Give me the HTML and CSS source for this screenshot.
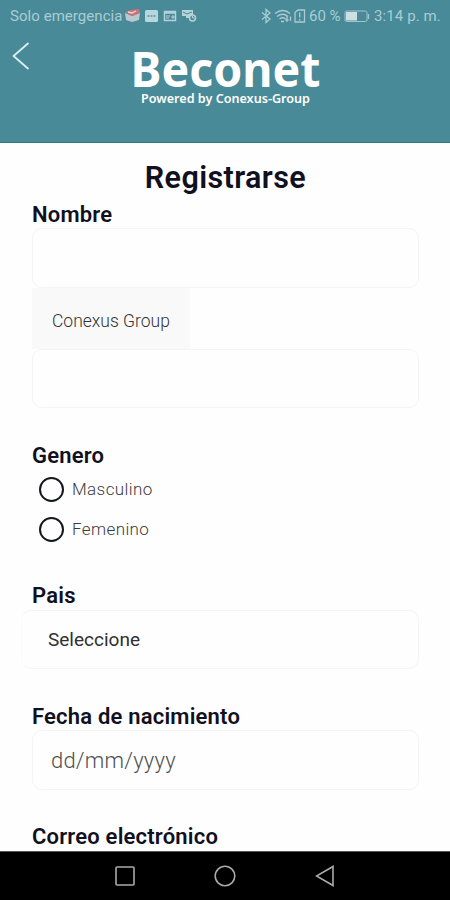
FILE: index.html
```html
<!DOCTYPE html>
<html lang="es">
<head>
<meta charset="utf-8">
<title>Registrarse</title>
<link rel="stylesheet" href="styles.css">
</head>
<body>
<header class="header">
  <div class="status">
    <span class="carrier">Solo emergencia</span>
    <svg class="notifications" width="72" height="14" viewBox="0 0 72 14">
      <path d="M0 4 7 7 15 4 14 11 7 13 1 11Z" fill="#b9c9cf"/>
      <path d="M0 3 6 1 14 0 15 4 7 7Z" fill="#ce7378"/>
      <path d="M3 3 7 4 11 2" fill="none" stroke="#edd2d2" stroke-width="1.3"/>
      <rect x="20" y="1" width="13" height="12" rx="1.5" fill="#b8d7dd"/>
      <path d="M22.500 7h8" stroke="#6fa2ae" stroke-width="2" stroke-dasharray="2 1"/>
      <path d="M39.500 2.500h11v9h-11zM39 4h12" fill="none" stroke="#b4d2d8" stroke-width="1.500"/>
      <path d="M41 7h4M41 9h3M47 7h2v2h-2z" fill="none" stroke="#b4d2d8"/>
      <path d="M57 1h11v5H66l-2 3h-3V7h-4z" fill="#b4d2d8"/>
      <path d="M58 3l4 2 5-2" fill="none" stroke="#488a98"/>
      <circle cx="67.500" cy="9" r="3" fill="#488a98" stroke="#b4d2d8" stroke-width="1.500"/>
      <path d="M67.500 7v2h2" fill="none" stroke="#b4d2d8"/>
    </svg>
    <svg class="signals" width="46" height="16" viewBox="0 0 46 16" fill="none" stroke="#aacbd2" stroke-width="1.300">
      <path d="M1 4.500 9 11 5 14.500V1.500L9 5 1 11.500"/>
      <path d="M14 5.500q8-6 15 0M16 8.500q5.500-4.500 11 0M18.500 11q3-2.500 6 0M20 13.500h3"/>
      <path d="M26 8v5M24.500 11.500 26 13l1.500-1.500M29.500 13V8.500"/>
      <path d="M34 4.500 37 2h6.500v12H34zM38.700 4.500v5M38.700 11v1.500"/>
    </svg>
    <span class="percent">60 %</span>
    <svg class="battery" width="26" height="13" viewBox="0 0 26 13">
      <rect x="1" y="1" width="22" height="10.500" rx="1.500" fill="none" stroke="#a2c5cd"/>
      <path d="M2 2h11v8.500H2z" fill="#cce0e4"/>
      <path d="M24.500 4v5" stroke="#a2c5cd" stroke-width="1.300"/>
    </svg>
    <span class="clock">3:14 p. m.</span>
  </div>
  <div class="brand">
    <svg class="back" width="18" height="28" viewBox="0 0 18 28"><path d="M16.500 1 1.500 14 16.500 27" fill="none" stroke="#e0f2f5" stroke-width="1.700"/></svg>
    <svg class="logo" width="200" height="80" viewBox="-4 0 200 80" fill="#fff">
      <text class="logo-name" x="-1.500" y="54.500" textLength="190" lengthAdjust="spacingAndGlyphs">Beconet</text>
      <text class="logo-tag" x="9" y="70.500" textLength="169" lengthAdjust="spacingAndGlyphs">Powered by Conexus-Group</text>
    </svg>
  </div>
</header>
<main class="form">
  <h1 class="title">Registrarse</h1>
  <h2 class="label">Nombre</h2>
  <div class="field"></div>
  <div class="group">Conexus Group</div>
  <div class="field second"></div>
  <h2 class="label gender">Genero</h2>
  <div class="radio"><span class="ring"></span>Masculino</div>
  <div class="radio"><span class="ring"></span>Femenino</div>
  <h2 class="label country">Pais</h2>
  <div class="field select">Seleccione</div>
  <h2 class="label birth">Fecha de nacimiento</h2>
  <div class="field date">dd/mm/yyyy</div>
  <h2 class="label mail">Correo electrónico</h2>
</main>
<nav class="nav">
  <svg width="20" height="22" viewBox="0 0 20 22"><rect x="1" y="2" width="18" height="18" rx="1"/></svg>
  <svg width="22" height="22" viewBox="0 0 22 22"><circle cx="11" cy="11" r="9.800"/></svg>
  <svg width="20" height="22" viewBox="0 0 20 22"><path d="M18 1.500v19L1.500 11z"/></svg>
</nav>
</body>
</html>
```
FILE: styles.css
```css
* { box-sizing: border-box; }
body {
  margin: 0;
  width: 450px;
  height: 900px;
  display: flex;
  flex-direction: column;
  overflow: hidden;
  background: #fefefe;
  color: #101020;
  font-family: Roboto, "Liberation Sans", sans-serif;
}
.header {
  flex: none;
  height: 143px;
  background: #488a98;
  border-bottom: 1px solid #337988;
}
.status {
  display: flex;
  align-items: center;
  height: 32px;
  padding-left: 10px;
  color: #aacdd4;
  font-size: 15px;
  white-space: nowrap;
}
.status svg { flex: none; }
.carrier { flex: none; width: 115px; letter-spacing: .05px; }
.signals { margin-left: 64px; }
.percent { flex: none; width: 35px; margin-left: 2px; }
.battery { margin-left: 0; }
.clock { margin-left: 4px; letter-spacing: .1px; }
.brand { display: flex; align-items: flex-start; padding-left: 12px; }
.back { margin-top: 10px; }
.logo { margin: 0 0 0 98px; overflow: visible; }
.logo-name { font: 700 48px "Noto Sans", sans-serif; }
.logo-tag { font: 600 12.5px "Noto Sans", sans-serif; }
.form { flex: none; height: 708px; padding: 19px 32px 0; overflow: hidden; }
.title {
  margin: 0 0 0 1px;
  height: 40px;
  line-height: 32px;
  text-align: center;
  font-size: 30.5px;
  font-weight: 600;
  letter-spacing: .4px;
}
.label {
  margin: 0;
  height: 26px;
  line-height: 25px;
  font-size: 22px;
  font-weight: 600;
  letter-spacing: .2px;
}
.field {
  display: flex;
  align-items: center;
  width: 387px;
  height: 60px;
  border: 1px solid #f4f4f4;
  border-radius: 10px;
}
.group {
  width: 158px;
  height: 61px;
  padding-left: 20px;
  line-height: 66px;
  background: #f9f9f9;
  color: #333;
  font-size: 17.5px;
  font-weight: 350;
}
.second { height: 59px; }
.gender { margin-top: 35px; }
.radio {
  display: flex;
  align-items: center;
  gap: 8px;
  height: 40px;
  padding-left: 7px;
  color: #3c3c3c;
  font-size: 17px;
  font-weight: 350;
  letter-spacing: .4px;
}
.ring { width: 25px; height: 25px; border: 2px solid #15171c; border-radius: 50%; }
.country { margin-top: 34px; height: 27px; }
.select {
  width: 398px;
  height: 59px;
  margin-left: -11px;
  padding-left: 26px;
  border-left-color: #fafafa;
  color: #303030;
  font-size: 19px;
}
.birth { margin-top: 35px; }
.date { padding: 1px 0 0 18px; color: #505050; font-size: 22px; font-weight: 350; letter-spacing: .2px; }
.mail { margin-top: 34px; }
.nav {
  display: flex;
  flex: none;
  justify-content: center;
  gap: 79px;
  height: 49px;
  padding-top: 13px;
  background: #000;
  border-top: 1px solid #555;
}
.nav svg { fill: none; stroke: #aaa; stroke-width: 1.6; }
```
